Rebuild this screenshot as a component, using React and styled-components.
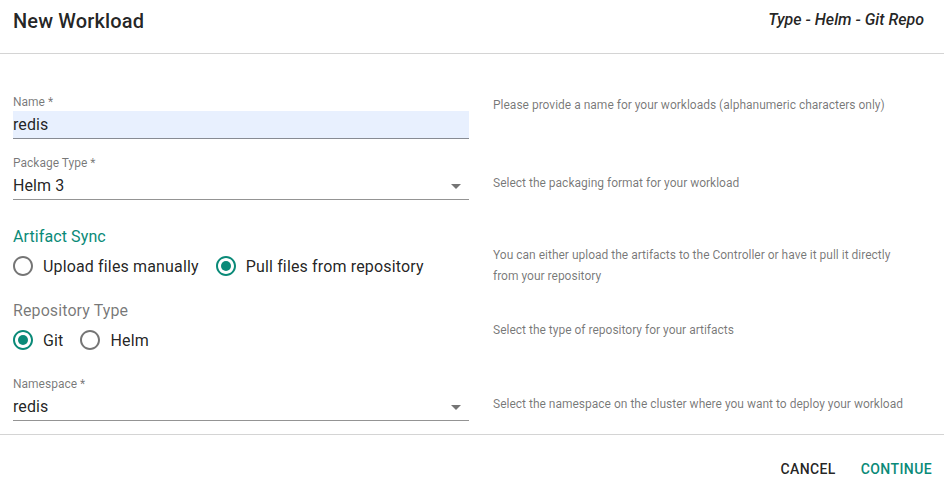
import React from "react";
import styled, { createGlobalStyle } from "styled-components";

const Global = createGlobalStyle`
  html, body { margin: 0; padding: 0; background: #fff; }
  body { font-family: Roboto, "Noto Sans", Arial, sans-serif; color: rgba(0,0,0,0.87); }
  * { box-sizing: border-box; }
`;

const TEAL = "#0a8a78";

const Dialog = styled.div`
  width: 944px;
  height: 488px;
  display: flex;
  flex-direction: column;
  background: #fff;
  overflow: hidden;
`;

const Header = styled.header`
  flex-shrink: 0;
  height: 54px;
  display: flex;
  align-items: flex-start;
  justify-content: space-between;
  padding: 9px 20px 0 13px;
  border-bottom: 1px solid #d4d4d4;
`;

const Title = styled.h2`
  margin: 0;
  font-size: 20px;
  line-height: 24px;
  font-weight: 500;
  letter-spacing: 0.15px;
  color: rgba(0,0,0,0.87);
`;

const Subtitle = styled.div`
  font-size: 16px;
  line-height: 22px;
  font-style: italic;
  font-weight: 500;
  color: rgba(0,0,0,0.87);
`;

const Body = styled.div`
  flex-shrink: 0;
  padding: 41px 0 13px 13px;
  border-bottom: 1px solid #d4d4d4;
`;

const Row = styled.div`
  display: grid;
  grid-template-columns: 456px 1fr;
  column-gap: 24px;
  align-items: start;
  margin-top: ${(p) => p.$mt || 0}px;
`;

const Field = styled.div`
  display: flex;
  flex-direction: column;
`;

const Label = styled.label`
  font-size: 12px;
  line-height: 14px;
  color: rgba(0,0,0,0.54);
`;

const InputBox = styled.div`
  position: relative;
  margin-top: 2px;
  height: 28px;
  display: flex;
  align-items: center;
  font-size: 16px;
  letter-spacing: 0.1px;
  color: rgba(0,0,0,0.87);
  background: ${(p) => (p.$autofill ? "#e8f0fe" : "transparent")};
  border-bottom: 1px solid rgba(0,0,0,0.42);
`;

const Arrow = styled.svg`
  position: absolute;
  right: 1px;
  top: 50%;
  transform: translateY(-50%);
  width: 24px;
  height: 24px;
  fill: rgba(0,0,0,0.54);
`;

const Help = styled.p`
  margin: ${(p) => p.$offset || 0}px 0 0;
  font-size: 12px;
  line-height: 21px;
  color: rgba(0,0,0,0.54);
  max-width: 420px;
`;

const Heading = styled.div`
  font-size: 16px;
  line-height: 20px;
  letter-spacing: 0.1px;
  color: ${(p) => (p.$accent ? TEAL : "rgba(0,0,0,0.54)")};
`;

const RadioGroup = styled.div`
  display: flex;
  align-items: center;
  height: 28px;
  margin-top: 5px;
`;

const RadioOption = styled.label`
  display: flex;
  align-items: center;
  gap: 10px;
  margin-right: 17px;
  font-size: 16px;
  letter-spacing: 0.15px;
  color: rgba(0,0,0,0.87);
`;

const RadioIcon = styled.svg`
  width: 20px;
  height: 20px;
  fill: ${(p) => (p.$checked ? TEAL : "rgba(0,0,0,0.54)")};
`;

const Footer = styled.footer`
  flex-shrink: 0;
  display: flex;
  justify-content: flex-end;
  align-items: flex-start;
  padding: 16px 4px 0;
  height: 53px;
`;

const Button = styled.button`
  border: 0;
  background: transparent;
  padding: 8px 8px;
  margin-left: 9px;
  font-family: inherit;
  font-size: 14px;
  line-height: 20px;
  font-weight: 500;
  letter-spacing: 0.4px;
  text-transform: uppercase;
  color: ${(p) => (p.$primary ? TEAL : "rgba(0,0,0,0.87)")};
`;

function Radio({ checked, children }) {
  return (
    <RadioOption>
      <RadioIcon $checked={checked} viewBox="2 2 20 20">
        <path d="M12 2C6.48 2 2 6.48 2 12s4.48 10 10 10 10-4.48 10-10S17.52 2 12 2zm0 18c-4.42 0-8-3.58-8-8s3.58-8 8-8 8 3.58 8 8-3.58 8-8 8z" />
        {checked && <circle cx="12" cy="12" r="5" />}
      </RadioIcon>
      {children}
    </RadioOption>
  );
}

function Select({ value }) {
  return (
    <InputBox>
      {value}
      <Arrow viewBox="0 0 24 24">
        <path d="M7 10l5 5 5-5z" />
      </Arrow>
    </InputBox>
  );
}

export default function App() {
  return (
    <>
      <Global />
      <Dialog>
        <Header>
          <Title>New Workload</Title>
          <Subtitle>Type - Helm - Git Repo</Subtitle>
        </Header>
        <Body>
          <Row>
            <Field>
              <Label>Name *</Label>
              <InputBox $autofill>redis</InputBox>
            </Field>
            <Help>Please provide a name for your workloads (alphanumeric characters only)</Help>
          </Row>
          <Row $mt={17}>
            <Field>
              <Label>Package Type *</Label>
              <Select value="Helm 3" />
            </Field>
            <Help $offset={17}>Select the packaging format for your workload</Help>
          </Row>
          <Row $mt={27}>
            <Field>
              <Heading $accent>Artifact Sync</Heading>
              <RadioGroup>
                <Radio>Upload files manually</Radio>
                <Radio checked>Pull files from repository</Radio>
              </RadioGroup>
            </Field>
            <Help $offset={18}>
              You can either upload the artifacts to the Controller or have it pull it directly from your repository
            </Help>
          </Row>
          <Row $mt={14}>
            <Field>
              <Heading>Repository Type</Heading>
              <RadioGroup>
                <Radio checked>Git</Radio>
                <Radio>Helm</Radio>
              </RadioGroup>
            </Field>
            <Help $offset={19}>Select the type of repository for your artifacts</Help>
          </Row>
          <Row $mt={23}>
            <Field>
              <Label>Namespace *</Label>
              <Select value="redis" />
            </Field>
            <Help $offset={17}>Select the namespace on the cluster where you want to deploy your workload</Help>
          </Row>
        </Body>
        <Footer>
          <Button>Cancel</Button>
          <Button $primary>Continue</Button>
        </Footer>
      </Dialog>
    </>
  );
}
